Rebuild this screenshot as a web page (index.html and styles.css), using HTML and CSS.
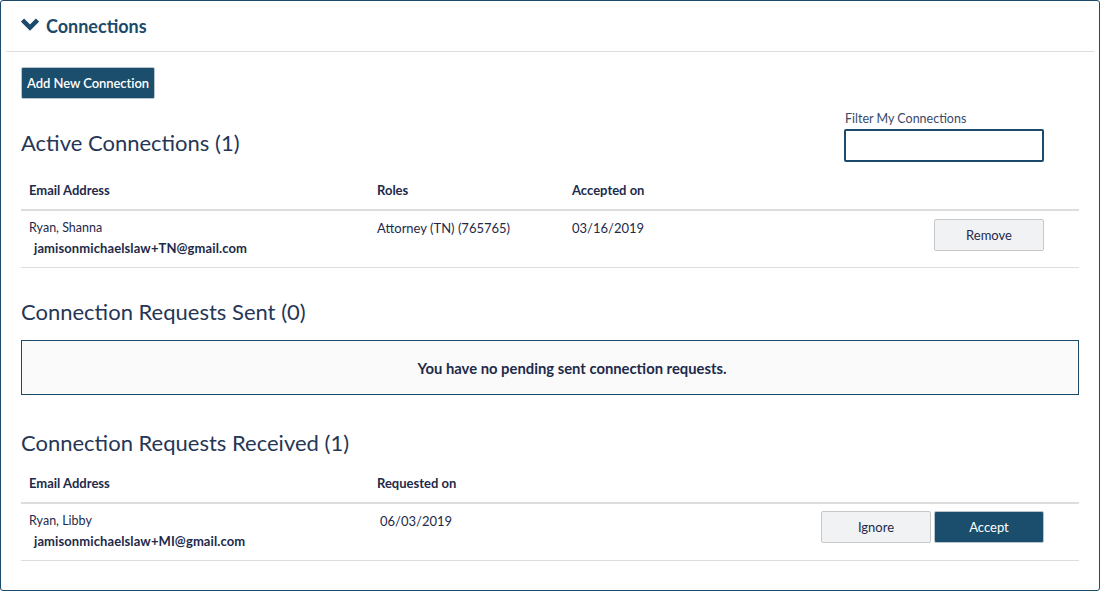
FILE: index.html
```html
<!DOCTYPE html>
<html lang="en">
<head>
    <meta charset="UTF-8">
    <title>Connections</title>
    <link rel="stylesheet" href="styles.css">
</head>
<body>
    <!-- Connections panel -->
    <div class="panel">
        <div class="panel-header">
            <svg class="chevron" width="18" height="13" viewBox="0 0 18 13">
                <polyline points="1.5,2 9,9.5 16.5,2" fill="none" stroke="#1b4a6b" stroke-width="4.5"/>
            </svg>
            <span>Connections</span>
        </div>

        <div class="panel-body">
            <button class="btn btn-primary add-btn">Add New Connection</button>

            <!-- Active connections -->
            <div class="section-top">
                <h2>Active Connections (1)</h2>
                <div class="filter">
                    <label for="filter">Filter My Connections</label>
                    <input type="text" id="filter">
                </div>
            </div>

            <div class="table">
                <div class="row head cols-active">
                    <div class="cell">Email Address</div>
                    <div class="cell">Roles</div>
                    <div class="cell">Accepted on</div>
                    <div class="cell"></div>
                </div>
                <div class="row cols-active">
                    <div class="cell">
                        <div class="name">Ryan, Shanna</div>
                        <div class="email">jamisonmichaelslaw+TN@gmail.com</div>
                    </div>
                    <div class="cell">Attorney (TN) (765765)</div>
                    <div class="cell">03/16/2019</div>
                    <div class="cell actions">
                        <button class="btn btn-light">Remove</button>
                    </div>
                </div>
            </div>

            <!-- Sent requests -->
            <h2 class="section-title">Connection Requests Sent (0)</h2>
            <div class="empty-box">You have no pending sent connection requests.</div>

            <!-- Received requests -->
            <h2 class="section-title received">Connection Requests Received (1)</h2>
            <div class="table">
                <div class="row head cols-received">
                    <div class="cell">Email Address</div>
                    <div class="cell">Requested on</div>
                    <div class="cell"></div>
                </div>
                <div class="row cols-received">
                    <div class="cell">
                        <div class="name">Ryan, Libby</div>
                        <div class="email">jamisonmichaelslaw+MI@gmail.com</div>
                    </div>
                    <div class="cell date-shift">06/03/2019</div>
                    <div class="cell actions received-actions">
                        <button class="btn btn-light">Ignore</button>
                        <button class="btn btn-primary">Accept</button>
                    </div>
                </div>
            </div>
        </div>
    </div>
</body>
</html>
```

FILE: styles.css
```css
/* Connections page */
body {
    margin: 0;
    padding: 0;
    font-family: 'Lato', 'Open Sans', sans-serif;
    color: #1e2a4a;
    background: #ffffff;
}

.panel {
    width: 1098px;
    height: 589px;
    border: 1px solid #1b4a6b;
    border-radius: 3px;
    overflow: hidden;
}

.panel-header {
    display: flex;
    align-items: center;
    gap: 7px;
    height: 50px;
    margin: 0 5px;
    padding-left: 15px;
    border-bottom: 1px solid #dddddd;
    font-size: 18px;
    font-weight: bold;
    color: #1b4a6b;
}

.chevron {
    margin-top: -4px;
}

.panel-body {
    padding: 15px 20px 0 20px;
}

.btn {
    font-family: inherit;
    font-size: 13px;
    height: 32px;
    border-radius: 2px;
    cursor: pointer;
}

.btn-primary {
    background: #1b4d6c;
    color: #ffffff;
    border: 1px solid #b9c4cc;
}

.btn-light {
    background: #f1f2f4;
    color: #1e2a4a;
    border: 1px solid #c8c8c8;
    width: 110px;
}

.add-btn {
    padding: 0 5px;
    font-weight: 600;
    letter-spacing: -0.05px;
}

.actions .btn-primary {
    width: 110px;
}

h2 {
    margin: 0;
    font-weight: normal;
    font-size: 22px;
    color: #263656;
}

.section-top {
    display: flex;
    justify-content: space-between;
    align-items: flex-start;
    height: 72px;
}

.section-top h2 {
    margin-top: 30px;
}

.filter {
    display: flex;
    flex-direction: column;
    margin-top: 12px;
    margin-right: 35px;
}

.filter label {
    font-size: 12.5px;
    color: #3a4a6a;
    margin-bottom: 3px;
    margin-left: 1px;
}

.filter input {
    width: 200px;
    height: 33px;
    padding: 0 2px;
    border: 2px solid #1b4a6b;
    border-radius: 2px;
    box-sizing: border-box;
}

.table {
    width: 1058px;
}

.row {
    display: grid;
    border-bottom: 1px solid #dddddd;
    font-size: 13px;
}

.row.head {
    border-bottom: 2px solid #dddddd;
    font-weight: bold;
    height: 40px;
    align-items: center;
    box-sizing: border-box;
}

.cols-active {
    grid-template-columns: 356px 195px 1fr auto;
}

.cols-received {
    grid-template-columns: 356px 1fr auto;
}

.row .cell:first-child {
    padding-left: 8px;
}

.row:not(.head) {
    height: 57px;
    box-sizing: border-box;
    padding-top: 9px;
}

.name {
    font-size: 12.5px;
}

.email {
    font-weight: bold;
    margin-top: 4px;
    padding-left: 5px;
    letter-spacing: 0.1px;
}

.cell {
    line-height: 16px;
}

.actions {
    display: flex;
    gap: 3px;
    padding-right: 35px;
    margin-top: -1px;
}

.received-actions {
    margin-top: -2px;
}

.date-shift {
    padding-left: 3px;
}

.section-title {
    margin-top: 30px;
}

.empty-box {
    margin-top: 15px;
    width: 1058px;
    box-sizing: border-box;
    height: 55px;
    padding-left: 44px;
    border: 1px solid #1b4a6b;
    background: #fafafa;
    display: flex;
    justify-content: center;
    align-items: center;
    font-weight: bold;
    font-size: 14.8px;
}

.section-title.received {
    margin-top: 34px;
    margin-bottom: 8px;
}
```
